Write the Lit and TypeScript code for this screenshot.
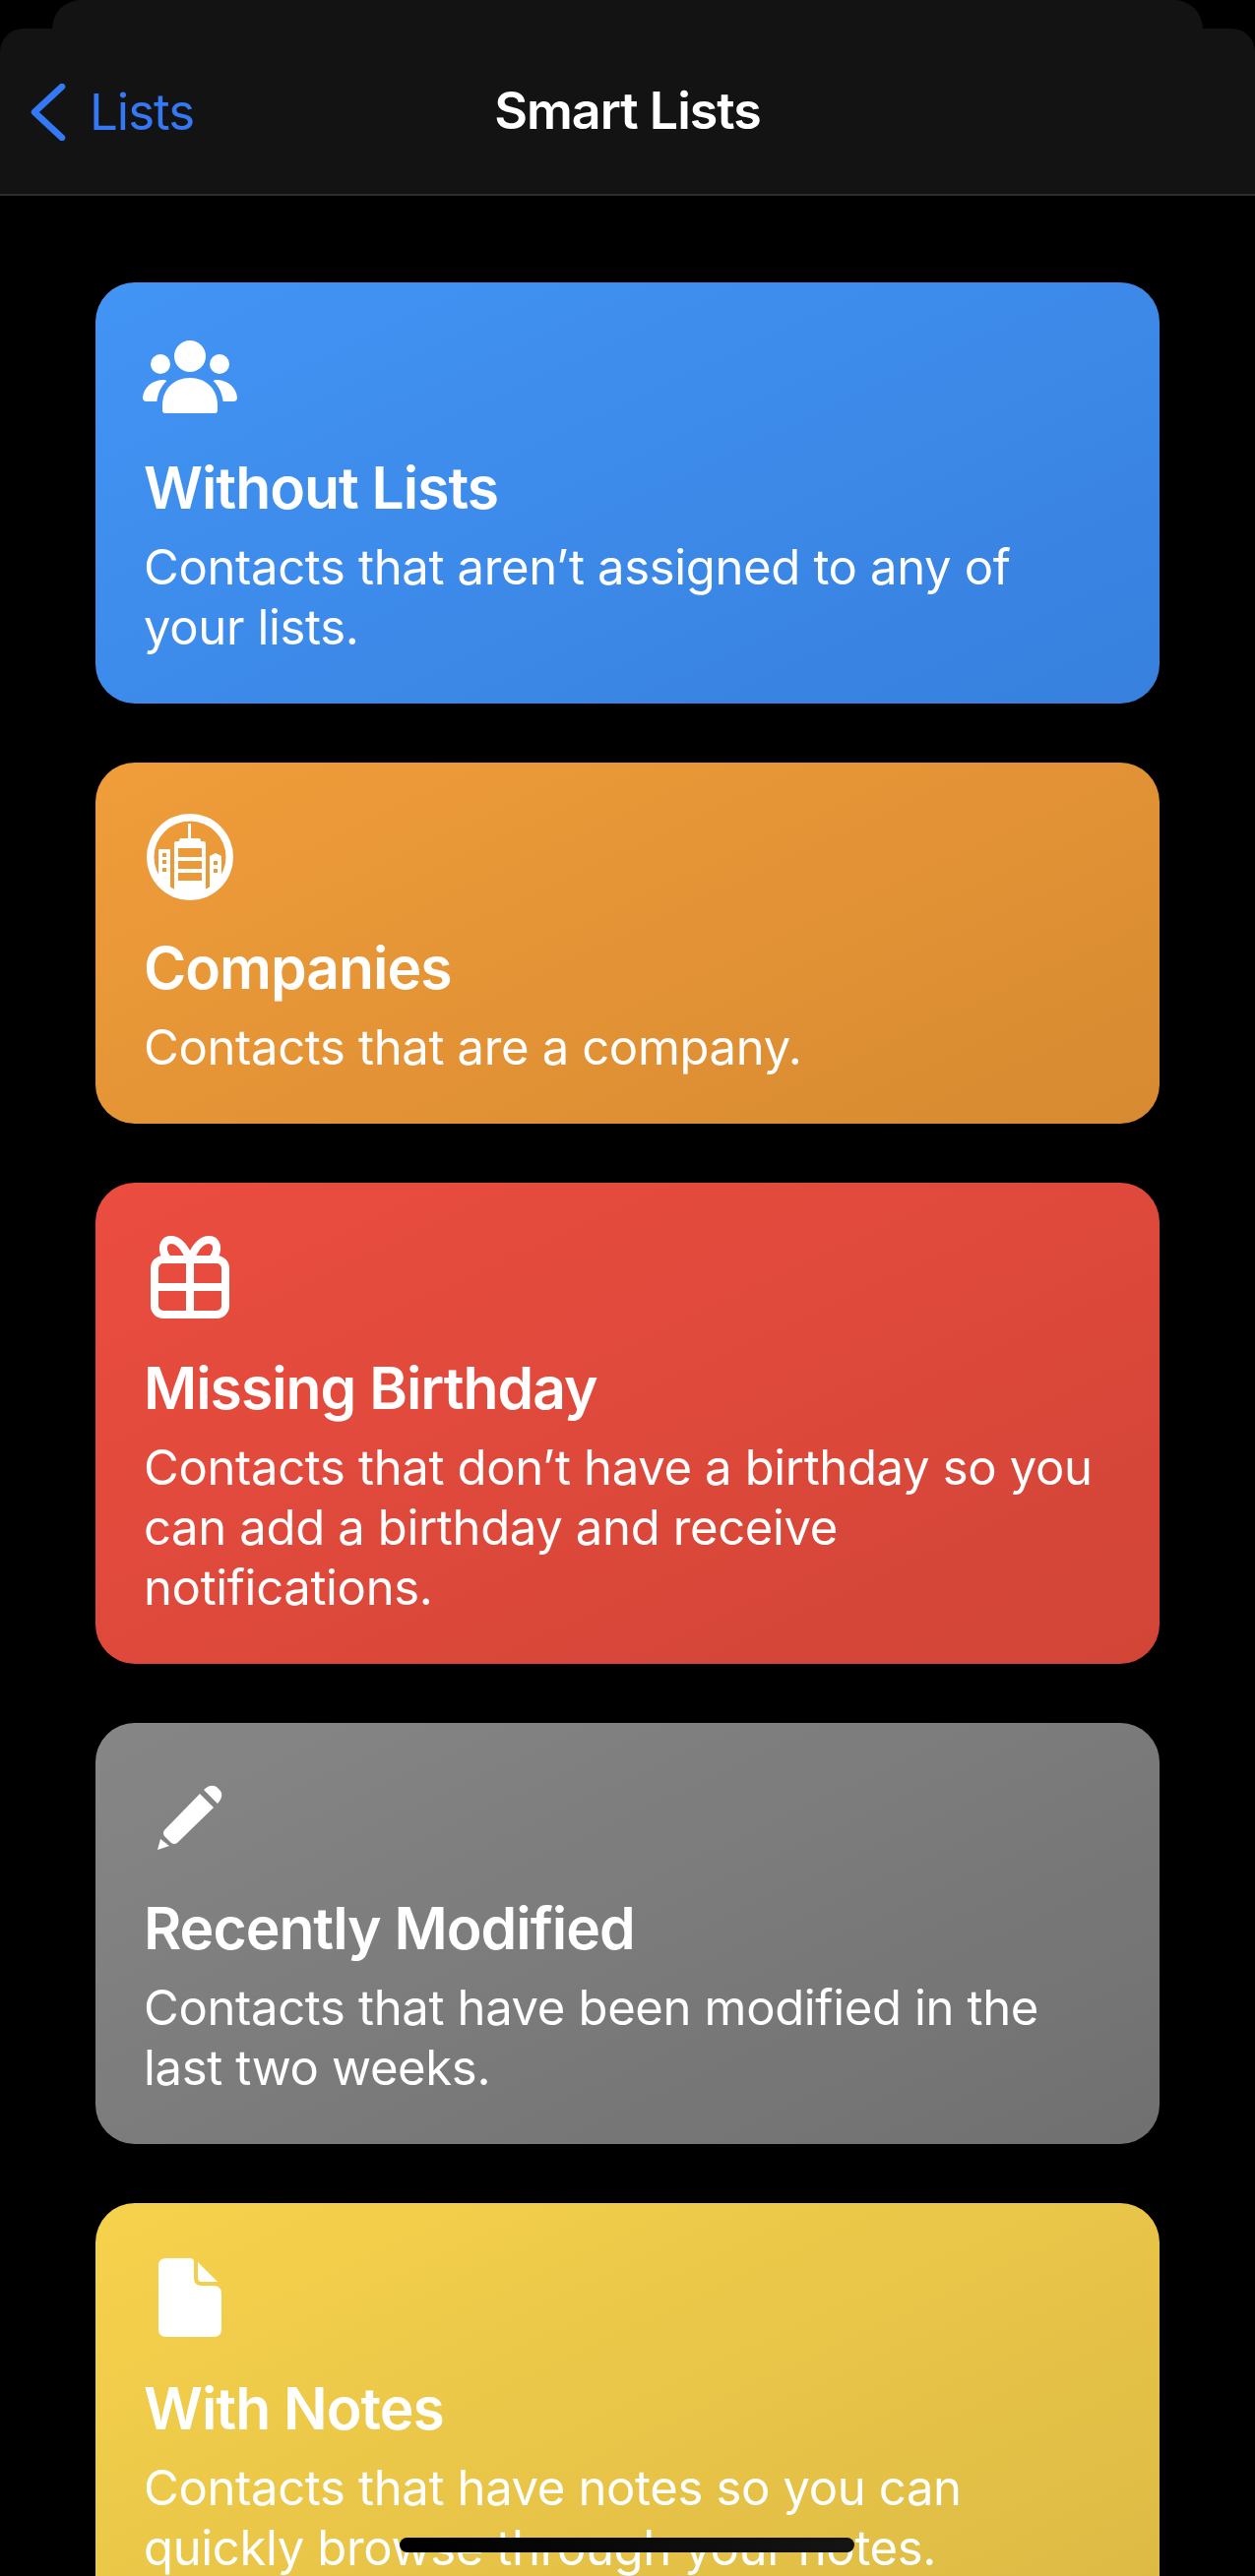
import { LitElement, html, css, svg } from "lit";
import { customElement } from "lit/decorators.js";

const people = svg`<svg class="i" width="96" height="74" viewBox="0 0 96 74" fill="#fff"><circle cx="48" cy="16" r="16"/><circle cx="18" cy="24" r="10"/><circle cx="78" cy="24" r="10"/><path d="M20 66C20 49 32 38 48 38S76 49 76 66V71A3 3 0 0 1 73 74H23A3 3 0 0 1 20 71Z"/><path d="M24.500 41C18 47 15.500 54 14.300 62H4A4 4 0 0 1 0 58C1 48 9 40 22 40Z"/><path d="M71.500 41C78 47 80.500 54 81.700 62H92A4 4 0 0 0 96 58C95 48 87 40 74 40Z"/></svg>`;
const company = svg`<svg class="i" width="88" height="88" viewBox="0 0 88 88" fill="#fff"><path fill-rule="evenodd" d="M44 0A44 44 0 1 0 44 88A44 44 0 1 0 44 0ZM44 7.500A36.500 36.500 0 1 1 44 80.500A36.500 36.500 0 1 1 44 7.500Z"/><path fill-rule="evenodd" d="M42 10H45V25H53Q55 25 55 28H58Q60 28 60 30V82H28V30Q28 28 30 28H33Q33 25 35 25H42ZM32 35V44H56V35ZM32 48V56H56V48ZM32 60V68H56V60Z"/><path fill-rule="evenodd" d="M12 37Q12 36 13 36H23Q24 36 24 37V76L12 66ZM16 40V44H20V40ZM16 47V51H20V47ZM16 55V59H20V55Z"/><path fill-rule="evenodd" d="M64 43L70 40L76 43V66L64 76ZM68 48V52H72V48ZM68 56V60H72V56Z"/></svg>`;
const gift = svg`<svg class="i" width="80" height="84" viewBox="0 0 80 84" fill="none" stroke="#fff" stroke-width="8"><rect x="4" y="24" width="72" height="56" rx="9"/><path d="M4 52H76M40 24V80"/><path d="M40 24C34 10 27 4 21 4C14 4 12.500 10 13 14C13.500 19 16 22 18 24"/><path d="M40 24C46 10 53 4 59 4C66 4 67.500 10 67 14C66.500 19 64 22 62 24"/></svg>`;
const pencil = svg`<svg class="i" width="67" height="67" viewBox="0 0 67 67" fill="#fff"><path d="M43 9L57 23L20 59Q17 61 14 59L7 52Q5 49 7 46Z"/><path d="M47 5L61 19C66 14 67 8 62 4C58 -1 52 0 47 5Z"/><path d="M3 55L12 62L0 66Z"/></svg>`;
const note = svg`<svg class="i" width="64" height="80" viewBox="0 0 64 80" fill="#fff"><path d="M8 0H32Q36 0 36 4V20Q36 28 44 28H56Q64 28 64 36V72Q64 80 56 80H8Q0 80 0 72V8Q0 0 8 0Z"/><path d="M40 4L60 24H44Q40 24 40 20Z"/></svg>`;

const cards = [
  { cls: "blue", icon: people, t: "Without Lists", d: "Contacts that aren’t assigned to any of your lists." },
  { cls: "orange", icon: company, t: "Companies", d: "Contacts that are a company." },
  { cls: "red", icon: gift, t: "Missing Birthday", d: "Contacts that don’t have a birthday so you can add a birthday and receive notifications." },
  { cls: "gray", icon: pencil, t: "Recently Modified", d: "Contacts that have been modified in the last two weeks." },
  { cls: "yellow", icon: note, t: "With Notes", d: "Contacts that have notes so you can quickly browse through your notes." },
];

@customElement("app-root")
export class AppRoot extends LitElement {
  static styles = css`
    :host { display: block; position: relative; height: 2618px; overflow: hidden; background: #000; font-family: Inter, "Liberation Sans", sans-serif; color: #fff; }
    .sheet { height: 29px; margin: 0 53px; background: #131314; border-radius: 32px 32px 0 0; }
    .bar { height: 170px; box-sizing: border-box; background: #131314; border-radius: 24px 24px 0 0; border-bottom: 2px solid #2c2c2e; display: grid; grid-template-columns: 1fr auto 1fr; align-items: start; padding-top: 56px; }
    .back { display: flex; align-items: center; gap: 24px; padding-left: 31px; color: #3478f6; font-size: 51px; line-height: 56px; letter-spacing: -1px; }
    .title { font-size: 52px; line-height: 56px; font-weight: 600; letter-spacing: -1px; }
    .list { display: flex; flex-direction: column; gap: 60px; padding: 88px 97px 0 97px; }
    .card { border-radius: 40px; padding: 46px 50px 47px 49px; }
    .icon { height: 100px; width: 96px; margin-left: -1px; margin-bottom: 31px; display: flex; align-items: center; justify-content: center; }
    .i { display: block; }
    .t { font-size: 58.800px; line-height: 64px; font-weight: 600; letter-spacing: -1px; }
    .d { font-size: 49px; line-height: 61px; letter-spacing: -0.35px; margin-top: 18px; }
    .blue { background: linear-gradient(155deg, #4294f5, #3780de); }
    .orange { background: linear-gradient(155deg, #f09d3a, #d78a31); }
    .red { background: linear-gradient(155deg, #eb4d3f, #d14537); }
    .gray { background: linear-gradient(155deg, #868686, #707070); }
    .yellow { background: linear-gradient(155deg, #f6d24c, #dcb944); }
    .home { position: absolute; left: 406px; top: 2579px; width: 462px; height: 15px; border-radius: 8px; background: linear-gradient(90deg, #000, #141414); }
  `;
  render() {
    return html`
      <div class="sheet"></div>
      <div class="bar">
        <div class="back">
          <svg width="36" height="58" viewBox="0 0 36 58" fill="none" stroke="#3478f6" stroke-width="6.500" stroke-linecap="round" stroke-linejoin="round"><path d="M32 3L4 29L32 55"/></svg>
          <span>Lists</span>
        </div>
        <div class="title">Smart Lists</div>
        <div></div>
      </div>
      <div class="list">
        ${cards.map((c) => html`<div class="card ${c.cls}">
          <div class="icon">${c.icon}</div>
          <div class="t">${c.t}</div>
          <div class="d">${c.d}</div>
        </div>`)}
      </div>
      <div class="home"></div>
    `;
  }
}
